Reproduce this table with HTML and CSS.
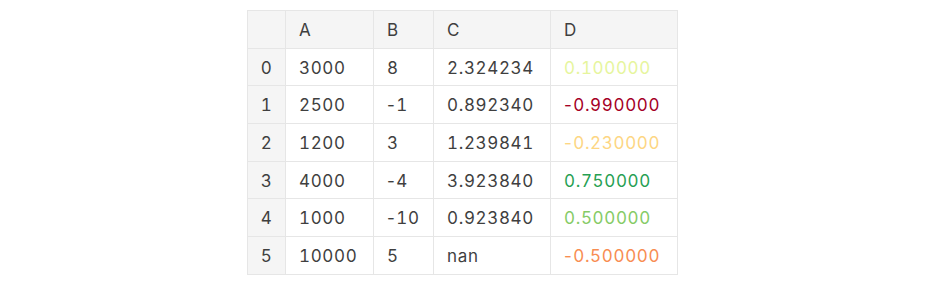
FILE: index.html
```html
<!DOCTYPE html>
<html>
<head>
<meta charset="utf-8">
<link rel="stylesheet" href="styles.css">
</head>
<body>
<div class="wrap">
<table class="df">
  <thead>
    <tr><th class="idx"></th><th class="ca">A</th><th class="cb">B</th><th class="cc">C</th><th class="cd">D</th></tr>
  </thead>
  <tbody>
    <tr><th class="idx">0</th><td>3000</td><td>8</td><td>2.324234</td><td class="v1">0.100000</td></tr>
    <tr><th class="idx">1</th><td>2500</td><td><span class="neg">-</span>1</td><td>0.892340</td><td class="v2"><span class="neg">-</span>0.990000</td></tr>
    <tr><th class="idx">2</th><td>1200</td><td>3</td><td>1.239841</td><td class="v3"><span class="neg">-</span>0.230000</td></tr>
    <tr><th class="idx">3</th><td>4000</td><td><span class="neg">-</span>4</td><td>3.923840</td><td class="v4">0.750000</td></tr>
    <tr><th class="idx">4</th><td>1000</td><td><span class="neg">-</span>10</td><td>0.923840</td><td class="v5">0.500000</td></tr>
    <tr><th class="idx">5</th><td>10000</td><td>5</td><td>nan</td><td class="v6"><span class="neg">-</span>0.500000</td></tr>
  </tbody>
</table>
</div>
</body>
</html>
```
FILE: styles.css
```css
html, body { margin: 0; padding: 0; background: #fff; }
.wrap { padding: 10px 0 0 247px; }
.df {
  border-collapse: collapse;
  font-family: Inter, "Open Sans", sans-serif;
  font-size: 17px;
  letter-spacing: 0.65px;
  font-variant-numeric: tabular-nums;
  color: #3f3f3f;
  table-layout: fixed;
}
.df th, .df td {
  border: 1px solid #e6e6e6;
  height: 37.7px;
  padding: 1px 0 0 13px;
  text-align: left;
  font-weight: 400;
  box-sizing: border-box;
  white-space: nowrap;
}
.df thead th { background: #f5f5f5; }
.df th.idx { background: #f5f5f5; width: 38px; padding: 1px 0 0 0; text-align: center; }
.neg { font-variant-numeric: normal; letter-spacing: 1.4px; }
.ca { width: 88px; }
.cb { width: 60px; }
.cc { width: 117px; }
.cd { width: 127px; }
.v1 { color: #e6f59d; }
.v2 { color: #a50026; }
.v3 { color: #fdd683; }
.v4 { color: #279f53; }
.v5 { color: #86cb66; }
.v6 { color: #f88d52; }
```
